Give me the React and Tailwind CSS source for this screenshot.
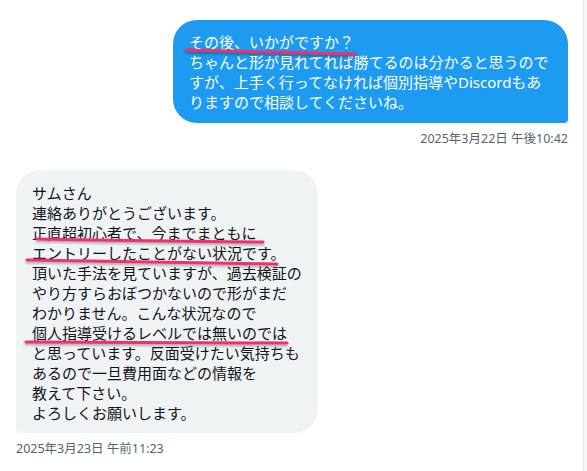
import React from 'react';

const sentLines = [
  'その後、いかがですか？',
  'ちゃんと形が見れてれば勝てるのは分かると思うので',
  'すが、上手く行ってなければ個別指導やDiscordもあ',
  'りますので相談してくださいね。',
];

const replyLines = [
  'サムさん',
  '連絡ありがとうございます。',
  '正直超初心者で、今までまともに',
  'エントリーしたことがない状況です。',
  '頂いた手法を見ていますが、過去検証の',
  'やり方すらおぼつかないので形がまだ',
  'わかりません。こんな状況なので',
  '個人指導受けるレベルでは無いのでは',
  'と思っています。反面受けたい気持ちも',
  'あるので一旦費用面などの情報を',
  '教えて下さい。',
  'よろしくお願いします。',
];

// hand-drawn highlight strokes laid over the bubble text
const Marks = ({ paths }) => (
  <svg className="pointer-events-none absolute inset-0 h-full w-full drop-shadow-[0_2px_1px_rgba(0,0,0,0.28)]">
    {paths.map((d, i) => (
      <path key={i} d={d} fill="none" stroke="#f42f6c" strokeWidth="3" strokeLinecap="round" />
    ))}
  </svg>
);

const App = () => {
  return (
    <div
      className="flex min-h-[471px] w-[587px] bg-[#f7f9f9]"
      style={{ fontFamily: '"Noto Sans", "Noto Sans CJK JP", sans-serif' }}
    >
      <div className="w-[584px] border-r border-[#e6e8e9] bg-white pl-4 pr-[15px] pt-5">
        {/* sent message */}
        <div className="flex flex-col items-end">
          <div className="relative w-[395px] rounded-3xl rounded-br-[4px] bg-[#1d9bf0] px-4 pb-[11px] pt-3 text-[15px] leading-[20px] text-white">
            {sentLines.map((line) => (
              <div key={line} className="whitespace-nowrap">{line}</div>
            ))}
            <Marks paths={['M13 30 Q100 32 182 34']} />
          </div>
          <div className="mt-2 text-[12.5px] leading-[16px] text-[#536471]">2025年3月22日 午後10:42</div>
        </div>

        {/* received message */}
        <div className="mt-[23px] flex flex-col items-start">
          <div className="relative w-[302px] rounded-3xl rounded-bl-[4px] bg-[#eff3f4] px-4 pb-[10px] pt-[13px] text-[15px] leading-[20px] text-[#0f1419]">
            {replyLines.map((line) => (
              <div key={line} className="whitespace-nowrap">{line}</div>
            ))}
            <Marks
              paths={[
                'M21 69 Q130 71 247 72',
                'M11 90 Q140 92 261 94',
                'M10 172 Q140 173 271 173',
              ]}
            />
          </div>
          <div className="mt-2 text-[12.5px] leading-[16px] text-[#536471]">2025年3月23日 午前11:23</div>
        </div>
      </div>
    </div>
  );
};

export default App;
